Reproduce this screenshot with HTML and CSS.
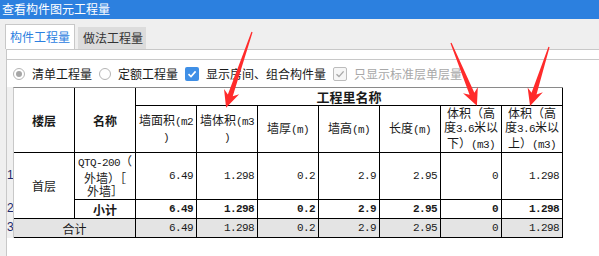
FILE: index.html
```html
<!DOCTYPE html>
<html lang="zh">

<head>
    <meta charset="UTF-8">
    <title>查看构件图元工程量</title>
    <link rel="stylesheet" href="styles.css">
</head>

<body>
    <div class="window">
        <div class="titlebar">查看构件图元工程量</div>
        <div class="tabs">
            <div class="tab active">构件工程量</div>
            <div class="tab">做法工程量</div>
        </div>
        <div class="panel">
            <div class="panel-body">
                <div class="options">
                    <div class="opt"><span class="radio checked"></span>清单工程量</div>
                    <div class="opt"><span class="radio"></span>定额工程量</div>
                    <div class="opt">
                        <span class="check on">
                            <svg width="10" height="10" viewBox="0 0 10 10"><path d="M1.5 5.2 L4 7.6 L8.6 2.4" fill="none" stroke="#fff" stroke-width="1.6"/></svg>
                        </span>显示房间、组合构件量
                    </div>
                    <div class="opt disabled">
                        <span class="check off">
                            <svg width="10" height="10" viewBox="0 0 10 10"><path d="M1.5 5.2 L4 7.6 L8.6 2.4" fill="none" stroke="#a8a8a8" stroke-width="1.4"/></svg>
                        </span>只显示标准层单层量
                    </div>
                </div>
                <div class="grid">
                    <div class="rownums">
                        <div class="rn head"></div>
                        <div class="rn tall">1</div>
                        <div class="rn">2</div>
                        <div class="rn">3</div>
                    </div>
                    <table class="qty">
                        <colgroup>
                            <col><col><col><col><col><col><col><col><col>
                        </colgroup>
                        <tr class="h1">
                            <th rowspan="2" class="strong">楼层</th>
                            <th rowspan="2" class="strong">名称</th>
                            <th colspan="7" class="strong big">工程里名称</th>
                        </tr>
                        <tr class="h2">
                            <th><span class="line">墙面积<span class="lat">(m2</span></span><br><span class="lat">)</span></th>
                            <th><span class="line">墙体积<span class="lat">(m3</span></span><br><span class="lat">)</span></th>
                            <th>墙厚<span class="lat">(m)</span></th>
                            <th>墙高<span class="lat">(m)</span></th>
                            <th>长度<span class="lat">(m)</span></th>
                            <th class="tri">体积（高<br><span class="line">度<span class="lat">3.6</span>米以</span><br>下）<span class="lat">(m3)</span></th>
                            <th class="tri">体积（高<br><span class="line">度<span class="lat">3.6</span>米以</span><br>上）<span class="lat">(m3)</span></th>
                        </tr>
                        <tr class="r1">
                            <td rowspan="2" class="center">首层</td>
                            <td class="center name"><span class="lat">QTQ-200</span>（<br>外墙）［<br>外墙］</td>
                            <td class="num">6.49</td>
                            <td class="num">1.298</td>
                            <td class="num">0.2</td>
                            <td class="num">2.9</td>
                            <td class="num">2.95</td>
                            <td class="num">0</td>
                            <td class="num">1.298</td>
                        </tr>
                        <tr class="r2 bold">
                            <td class="center">小计</td>
                            <td class="num">6.49</td>
                            <td class="num">1.298</td>
                            <td class="num">0.2</td>
                            <td class="num">2.9</td>
                            <td class="num">2.95</td>
                            <td class="num">0</td>
                            <td class="num">1.298</td>
                        </tr>
                        <tr class="r3 total">
                            <td colspan="2" class="center">合计</td>
                            <td class="num">6.49</td>
                            <td class="num">1.298</td>
                            <td class="num">0.2</td>
                            <td class="num">2.9</td>
                            <td class="num">2.95</td>
                            <td class="num">0</td>
                            <td class="num">1.298</td>
                        </tr>
                    </table>
                </div>
            </div>
        </div>

        <!-- 红色标注箭头 -->
        <svg class="marks" width="599" height="256" viewBox="0 0 599 256">
            <g fill="#ff2b2b">
                <polygon transform="translate(252 32) rotate(18.9)" points="-0.6,0 0.6,0 2.6,67 8,63 0,80 -8,63 -2.6,67"/>
                <polygon transform="translate(451 43) rotate(-22.4)" points="-0.6,0 0.6,0 2.6,55 8,51 0,68 -8,51 -2.6,55"/>
                <polygon transform="translate(549 47) rotate(17.8)" points="-0.6,0 0.6,0 2.6,49 8,45 0,62 -8,45 -2.6,49"/>
            </g>
        </svg>
    </div>
</body>

</html>
```

FILE: styles.css
```css
body {
    margin: 0;
    width: 599px;
    height: 256px;
    overflow: hidden;
    background: #efefef;
    font-family: "Noto Sans CJK SC", sans-serif;
    color: #1a1a1a;
}

.window {
    position: relative;
    height: 256px;
}

.titlebar {
    height: 19px;
    background: #2c80df;
    color: #fff;
    font-size: 12px;
    line-height: 18px;
    padding-left: 2px;
}

.tabs {
    height: 30px;
    display: flex;
    align-items: flex-end;
    gap: 3px;
    padding-left: 5px;
}

.tab {
    box-sizing: border-box;
    height: 22px;
    padding: 0 3px 0 5px;
    background: #dcdcdc;
    color: #333;
    font-size: 12px;
    line-height: 22px;
}

.tab.active {
    height: 25px;
    background: #fff;
    color: #2c80df;
    border: 1px solid #c8c8c8;
    border-bottom: none;
    padding: 0 4px 0 4px;
    line-height: 24px;
}

.panel {
    width: 640px;
    height: 207px;
    margin-left: 6px;
    background: #fff;
    border-top: 1px solid #c8c8c8;
    border-left: 1px solid #c8c8c8;
}

.panel-body {
    margin-top: 9px;
    border-top: 1px solid #c8c8c8;
}

.options {
    height: 27px;
    display: flex;
    align-items: center;
    padding-left: 6px;
    font-size: 12px;
}

.opt {
    display: flex;
    align-items: center;
    gap: 7px;
    margin-right: 7px;
    white-space: nowrap;
}

.opt.disabled {
    color: #a8a8a8;
}

.radio {
    box-sizing: border-box;
    width: 12px;
    height: 12px;
    border: 1px solid #b4b4b4;
    border-radius: 50%;
    background: #fff;
    display: flex;
    align-items: center;
    justify-content: center;
}

.radio.checked::after {
    content: "";
    width: 6px;
    height: 6px;
    border-radius: 50%;
    background: #a6a6a6;
}

.check {
    box-sizing: border-box;
    width: 14px;
    height: 14px;
    border-radius: 2px;
    display: flex;
    align-items: center;
    justify-content: center;
}

.check.on {
    background: #3f8fe6;
}

.check.off {
    background: #f6f6f6;
    border: 1px solid #bcbcbc;
}

.grid {
    display: flex;
}

.rownums {
    width: 6px;
    background: #f0f0f0;
    font-family: "Liberation Sans", sans-serif;
    font-size: 12px;
    color: #1d2a6b;
}

.rn {
    height: 19px;
    line-height: 19px;
}

.rn.head {
    height: 65px;
}

.rn.tall {
    height: 47px;
    line-height: 47px;
}

.qty {
    table-layout: fixed;
    border-collapse: separate;
    border-spacing: 0;
    width: 550px;
    border-top: 1px solid #8a8a8a;
    border-left: 1px solid #c8c8c8;
}

.qty col {
    width: 61px;
}

.qty th,
.qty td {
    box-sizing: border-box;
    border-right: 1px solid #000;
    border-bottom: 1px solid #000;
    padding: 0 1px;
    font-size: 12px;
    line-height: 13px;
    vertical-align: middle;
    overflow: hidden;
}

.qty th {
    font-weight: normal;
    text-align: center;
}

.qty th.strong {
    font-weight: bold;
}

.qty th.big {
    font-size: 13px;
}

.qty th.tri {
    line-height: 14px;
}

.line {
    white-space: nowrap;
}

.lat {
    font-family: "Liberation Mono", monospace;
    font-size: 11px;
    letter-spacing: -0.6px;
}

.h1 {
    height: 18px;
}

.h2,
.r1 {
    height: 47px;
}

.r2,
.r3 {
    height: 19px;
}

.center {
    text-align: center;
}

.qty td.name {
    line-height: 13.5px;
}

.num {
    text-align: right;
    font-family: "Liberation Mono", monospace;
    font-size: 11px !important;
    letter-spacing: -0.6px;
    padding-right: 3px !important;
}

.bold td {
    font-weight: bold;
}

.total td {
    background: #e4e4e4;
}

.marks {
    position: absolute;
    left: 0;
    top: 0;
    pointer-events: none;
}
```
